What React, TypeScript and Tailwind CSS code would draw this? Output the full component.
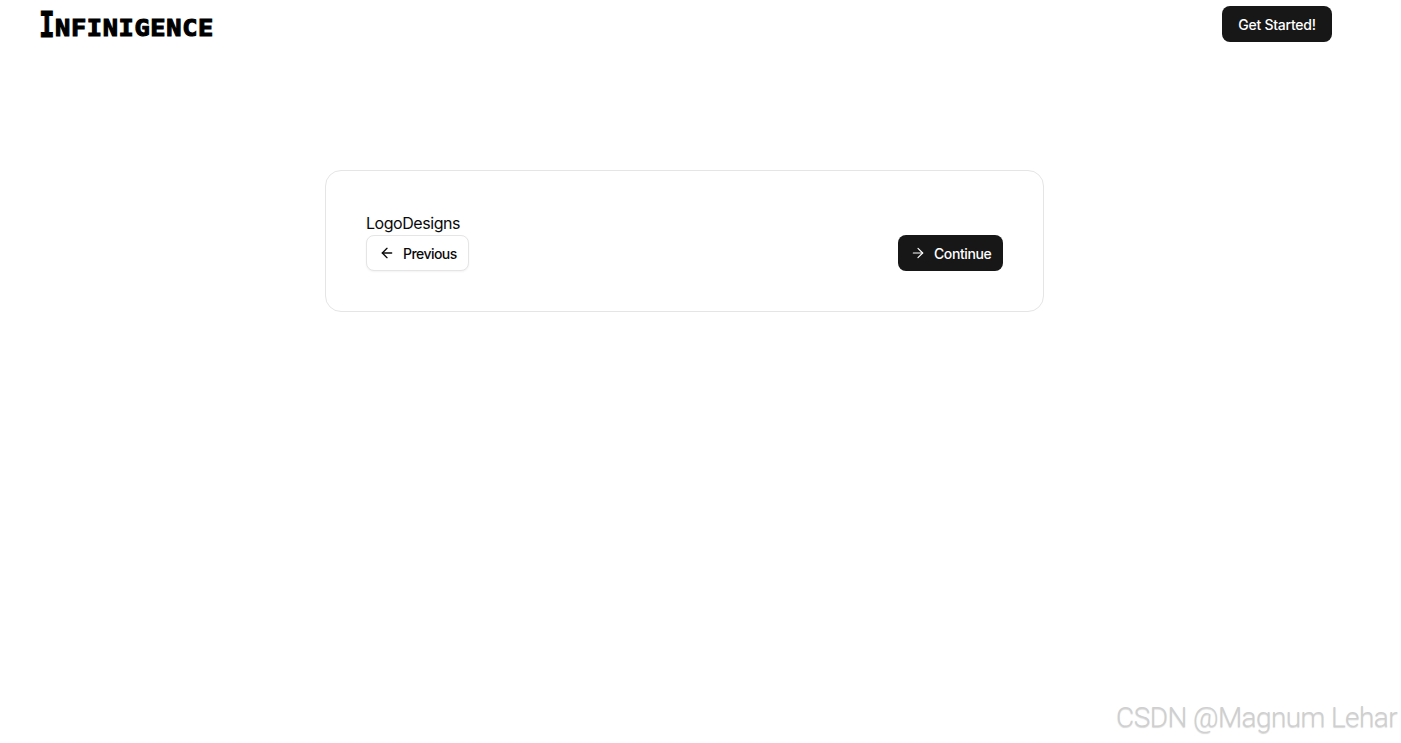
import React from 'react';
import { ArrowLeft, ArrowRight } from 'lucide-react';

const App = () => {
  return (
    <div className="relative h-[743px] bg-white font-['Inter',sans-serif] text-[#0a0a0a] overflow-hidden">
      <header className="flex items-start justify-between pl-[39px] pr-[69px] pt-[6px]">
        <div className="flex items-end h-[32px] font-['DejaVu_Sans_Mono',monospace] font-bold text-black leading-none">
          <span className="inline-block w-[16px] text-[26px] leading-[20px] origin-bottom scale-y-[1.35] [-webkit-text-stroke:0.8px_black]">I</span>
          <span className="inline-block text-[23px] leading-[20px] tracking-[0.6px] origin-left scale-x-110 [-webkit-text-stroke:1.1px_black]">NFINIGENCE</span>
        </div>
        <button className="w-[110px] h-[36px] rounded-lg bg-[#171717] text-white text-[14px] font-medium tracking-[-0.25px]">
          Get Started!
        </button>
      </header>

      <main className="mt-[128px] ml-[325px] w-[719px] h-[142px] rounded-2xl border border-[#e5e5e5] p-[40px]">
        <p className="text-[16px] leading-[24px] tracking-[-0.45px]">LogoDesigns</p>
        <div className="flex items-center justify-between">
          <button className="flex items-center gap-2 w-[103px] h-[36px] pl-3 rounded-lg border border-[#e5e5e5] bg-white shadow-xs text-[14px] font-medium tracking-[-0.55px]">
            <ArrowLeft size={16} />
            Previous
          </button>
          <button className="flex items-center gap-2 w-[105px] h-[36px] pl-3 rounded-lg bg-[#171717] text-white text-[14px] font-medium tracking-[-0.4px]">
            <ArrowRight size={16} strokeWidth={1.75} />
            Continue
          </button>
        </div>
      </main>

      <div className="absolute right-[4px] bottom-[8px] font-['Roboto',sans-serif] font-light text-[28px] leading-[34px] tracking-[-0.6px] text-[#cfcfcf] [text-shadow:0_1px_1px_#d8d8d8]">
        CSDN @Magnum Lehar
      </div>
    </div>
  );
};

export default App;
